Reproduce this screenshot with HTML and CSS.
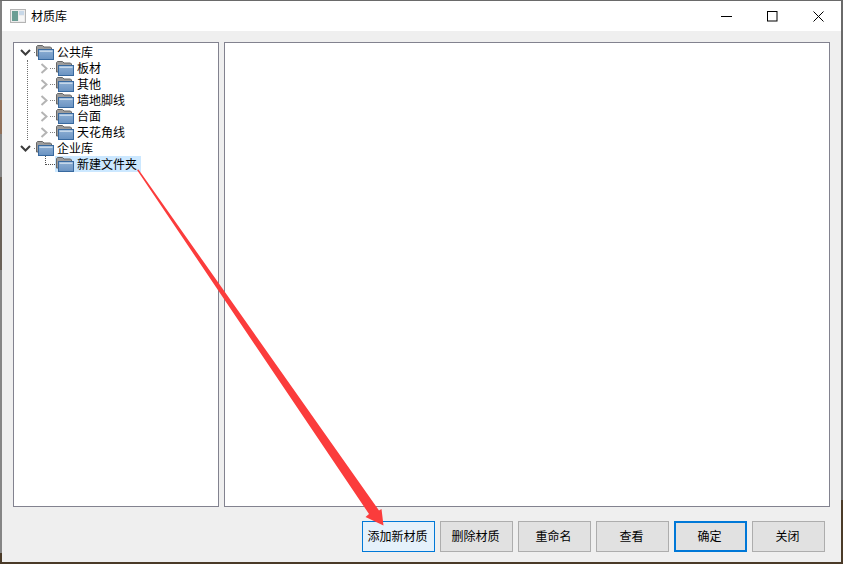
FILE: index.html
```html
<!DOCTYPE html>
<html lang="zh-CN">
<head>
<meta charset="utf-8">
<title>材质库</title>
<link rel="stylesheet" href="styles.css">
</head>
<body>
<svg class="defs" width="0" height="0" aria-hidden="true">
  <defs>
    <linearGradient id="fblue" x1="0" y1="0" x2="0" y2="1">
      <stop offset="0" stop-color="#8fb0d4"/>
      <stop offset="1" stop-color="#6a93c2"/>
    </linearGradient>
    <symbol id="folder" viewBox="0 0 18 16">
      <path d="M0.5 12V2.5L1.5 1.5H6.5L8 3H14.5L15.5 4V6H4V12Z" fill="#9c9c9c" stroke="#666"/>
      <rect x="2.5" y="5.5" width="15" height="10" fill="url(#fblue)" stroke="#38699f"/>
      <rect x="3.5" y="6.5" width="13" height="1.5" fill="#c4d7ea"/>
    </symbol>
    <symbol id="chev-r" viewBox="0 0 9 11"><path d="M1.5 1 6.5 5.5 1.5 10" fill="none" stroke="#b4b4b4" stroke-width="2"/></symbol>
    <symbol id="chev-d" viewBox="0 0 11 9"><path d="M1 2 5.5 6.5 10 2" fill="none" stroke="#3c3c3c" stroke-width="2"/></symbol>
  </defs>
</svg>
<div class="window">
  <header class="titlebar">
    <svg class="appicon" width="16" height="14" viewBox="0 0 16 14">
      <rect x="0.5" y="0.5" width="15" height="13" fill="#ececec" stroke="#b4b4b4"/>
      <rect x="2" y="2" width="6" height="10" fill="#6a9d94"/>
      <rect x="9" y="2" width="5" height="4" fill="#c8d8e8"/>
      <rect x="9" y="7" width="5" height="5" fill="#f6f6f6"/>
    </svg>
    <span class="title">材质库</span>
    <div class="controls">
      <span class="ctl"><svg width="11" height="11" viewBox="0 0 11 11"><path d="M0 5.5H11" stroke="#000"/></svg></span>
      <span class="ctl"><svg width="11" height="11" viewBox="0 0 11 11"><rect x="0.5" y="0.5" width="9.5" height="9.5" fill="none" stroke="#000"/></svg></span>
      <span class="ctl"><svg width="11" height="11" viewBox="0 0 11 11"><path d="M0.5 0.5 10.5 10.5M10.5 0.5 0.5 10.5" stroke="#000"/></svg></span>
    </div>
  </header>
  <main class="content">
    <div class="panels">
      <nav class="panel tree">
        <div class="row root"><span class="twisty"><svg width="11" height="9"><use href="#chev-d"/></svg></span><i class="dash"></i><svg class="ficon" width="18" height="16"><use href="#folder"/></svg><span class="label">公共库</span></div>
        <div class="children">
          <div class="row"><span class="twisty"><svg width="9" height="11"><use href="#chev-r"/></svg></span><i class="dash"></i><svg class="ficon" width="18" height="16"><use href="#folder"/></svg><span class="label">板材</span></div>
          <div class="row"><span class="twisty"><svg width="9" height="11"><use href="#chev-r"/></svg></span><i class="dash"></i><svg class="ficon" width="18" height="16"><use href="#folder"/></svg><span class="label">其他</span></div>
          <div class="row"><span class="twisty"><svg width="9" height="11"><use href="#chev-r"/></svg></span><i class="dash"></i><svg class="ficon" width="18" height="16"><use href="#folder"/></svg><span class="label">墙地脚线</span></div>
          <div class="row"><span class="twisty"><svg width="9" height="11"><use href="#chev-r"/></svg></span><i class="dash"></i><svg class="ficon" width="18" height="16"><use href="#folder"/></svg><span class="label">台面</span></div>
          <div class="row"><span class="twisty"><svg width="9" height="11"><use href="#chev-r"/></svg></span><i class="dash"></i><svg class="ficon" width="18" height="16"><use href="#folder"/></svg><span class="label">天花角线</span></div>
        </div>
        <div class="row root"><span class="twisty"><svg width="11" height="9"><use href="#chev-d"/></svg></span><i class="dash"></i><svg class="ficon" width="18" height="16"><use href="#folder"/></svg><span class="label">企业库</span></div>
        <div class="row leaf"><span class="twisty"></span><i class="elbow"></i><span class="selected"><svg class="ficon" width="18" height="16"><use href="#folder"/></svg><span class="label">新建文件夹</span></span></div>
      </nav>
      <section class="panel detail"></section>
    </div>
    <footer class="actions">
      <button class="btn hover">添加新材质</button>
      <button class="btn">删除材质</button>
      <button class="btn">重命名</button>
      <button class="btn">查看</button>
      <button class="btn default">确定</button>
      <button class="btn">关闭</button>
    </footer>
  </main>
</div>
<svg class="annotation" width="843" height="564" viewBox="0 0 843 564" aria-hidden="true">
  <polygon points="137,170 138.5,169.5 379,510.5 381.5,509 383.5,525.5 365.5,517 369,514" fill="#fb3c3c"/>
</svg>
</body>
</html>
```
FILE: styles.css
```css
* { box-sizing: border-box; }
html, body { margin: 0; padding: 0; }
body {
  position: relative;
  width: 843px;
  height: 564px;
  overflow: hidden;
  padding: 1px 1px 2px 2px;
  font: 12px/16px "Noto Sans CJK SC", "Liberation Sans", sans-serif;
  color: #000;
  background-color: #4a3a28;
  background-image:
    linear-gradient(#6a6a6a, #6a6a6a),
    linear-gradient(#6a6a6a, #6a6a6a),
    linear-gradient(to bottom,
      #808080 0, #808080 100px,
      #8f6f58 100px, #8f6f58 134px,
      #858585 134px, #858585 177px,
      #6b6258 177px, #6b6258 270px,
      #858585 270px, #858585 553px,
      #4a3a28 553px, #4a3a28 564px);
  background-repeat: no-repeat;
  background-size: 100% 1px, 2px 500px, 2px 100%;
  background-position: 0 0, right top, 0 0;
}
.defs { position: absolute; }
.window {
  width: 839px;
  height: 561px;
  display: flex;
  flex-direction: column;
  background: #efefef;
}
.titlebar {
  height: 30px;
  flex: none;
  background: #fff;
  display: flex;
  align-items: center;
  padding-left: 8px;
}
.appicon { flex: none; }
.title { margin-left: 5px; margin-top: -1px; }
.controls { margin-left: auto; display: flex; }
.ctl {
  width: 46px;
  height: 30px;
  display: flex;
  align-items: center;
  justify-content: center;
}
.content {
  flex: 1;
  display: flex;
  flex-direction: column;
  padding: 11px 11px 10px;
}
.panels { display: flex; gap: 5px; height: 465px; flex: none; }
.panel { background: #fff; border: 1px solid #82828f; }
.tree { width: 206px; flex: none; padding: 1px 0 0 0; }
.detail { flex: 1; }
.row {
  position: relative;
  height: 16px;
  display: flex;
  align-items: center;
}
.twisty {
  width: 17px;
  flex: none;
  margin-left: 3px;
  display: flex;
  align-items: center;
  justify-content: center;
}
.dash {
  width: 2px;
  flex: none;
  height: 1px;
  background-image: linear-gradient(to right, #808080 1px, transparent 1px);
  background-size: 2px 1px;
}
.ficon { flex: none; }
.label { margin-left: 3px; white-space: nowrap; }
.children {
  margin-left: 13px;
  border-left: 1px dotted #707070;
}
.children .twisty { margin-left: 10px; width: 12px; }
.children .dash { width: 6px; }
.leaf .twisty { margin-left: 22px; width: 9px; }
.elbow {
  flex: none;
  width: 10px;
  height: 9px;
  margin-top: -8px;
  border-left: 1px dotted #505050;
  border-bottom: 1px dotted #505050;
}
.selected {
  display: flex;
  align-items: center;
  height: 16px;
  background: #cce8ff;
  padding: 0 4px 0 1px;
}
.actions {
  display: flex;
  justify-content: flex-end;
  gap: 5px;
  margin-top: 14px;
  padding-right: 5px;
}
.btn {
  width: 73px;
  height: 31px;
  padding: 0 2px 1px 0;
  font: inherit;
  color: #000;
  background: #e1e1e1;
  border: 1px solid #adadad;
  border-radius: 0;
}
.btn.hover { background: #e5f1fb; border-color: #0078d7; }
.btn.default { border: 2px solid #0078d7; }
.annotation { position: absolute; left: 0; top: 0; pointer-events: none; }
```
